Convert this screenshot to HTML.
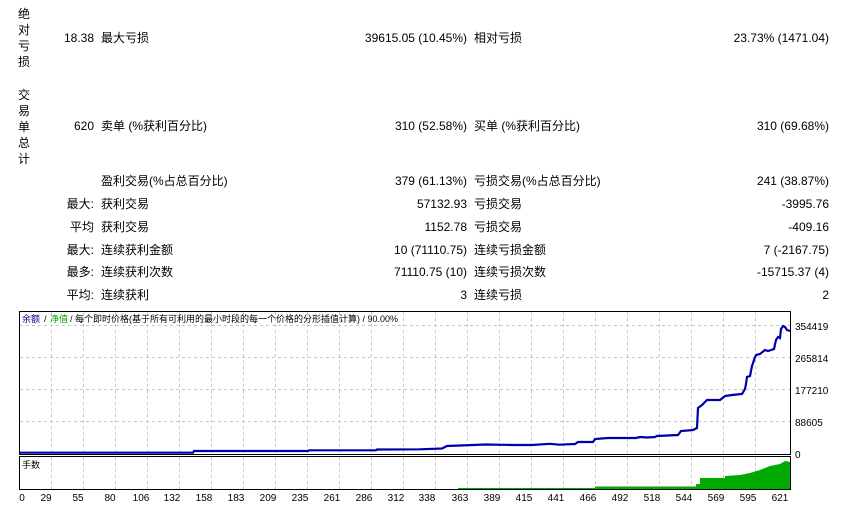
<!DOCTYPE html>
<html><head><meta charset="utf-8"><style>
body{margin:0;width:842px;height:505px;background:#fff;position:relative;overflow:hidden;font-family:"Liberation Sans","Noto Sans CJK SC",sans-serif;font-size:12px;color:#000}
.t{position:absolute;white-space:nowrap;line-height:16px}
.r{text-align:right}
</style></head><body>
<div class="t" style="left:18px;top:6px;width:14px;line-height:16px">绝<br>对<br>亏<br>损</div>
<div class="t" style="left:18px;top:87px;width:14px;line-height:16px">交<br>易<br>单<br>总<br>计</div>

<div class="t r" style="right:748px;top:30px">18.38</div>
<div class="t" style="left:101px;top:30px">最大亏损</div>
<div class="t r" style="right:375px;top:30px">39615.05 (10.45%)</div>
<div class="t" style="left:474px;top:30px">相对亏损</div>
<div class="t r" style="right:13px;top:30px">23.73% (1471.04)</div>

<div class="t r" style="right:748px;top:118px">620</div>
<div class="t" style="left:101px;top:118px">卖单 (%获利百分比)</div>
<div class="t r" style="right:375px;top:118px">310 (52.58%)</div>
<div class="t" style="left:474px;top:118px">买单 (%获利百分比)</div>
<div class="t r" style="right:13px;top:118px">310 (69.68%)</div>

<div class="t" style="left:101px;top:173px">盈利交易(%占总百分比)</div>
<div class="t r" style="right:375px;top:173px">379 (61.13%)</div>
<div class="t" style="left:474px;top:173px">亏损交易(%占总百分比)</div>
<div class="t r" style="right:13px;top:173px">241 (38.87%)</div>

<div class="t r" style="right:748px;top:196px">最大:</div>
<div class="t" style="left:101px;top:196px">获利交易</div>
<div class="t r" style="right:375px;top:196px">57132.93</div>
<div class="t" style="left:474px;top:196px">亏损交易</div>
<div class="t r" style="right:13px;top:196px">-3995.76</div>

<div class="t r" style="right:748px;top:219px">平均</div>
<div class="t" style="left:101px;top:219px">获利交易</div>
<div class="t r" style="right:375px;top:219px">1152.78</div>
<div class="t" style="left:474px;top:219px">亏损交易</div>
<div class="t r" style="right:13px;top:219px">-409.16</div>

<div class="t r" style="right:748px;top:242px">最大:</div>
<div class="t" style="left:101px;top:242px">连续获利金额</div>
<div class="t r" style="right:375px;top:242px">10 (71110.75)</div>
<div class="t" style="left:474px;top:242px">连续亏损金额</div>
<div class="t r" style="right:13px;top:242px">7 (-2167.75)</div>

<div class="t r" style="right:748px;top:264px">最多:</div>
<div class="t" style="left:101px;top:264px">连续获利次数</div>
<div class="t r" style="right:375px;top:264px">71110.75 (10)</div>
<div class="t" style="left:474px;top:264px">连续亏损次数</div>
<div class="t r" style="right:13px;top:264px">-15715.37 (4)</div>

<div class="t r" style="right:748px;top:287px">平均:</div>
<div class="t" style="left:101px;top:287px">连续获利</div>
<div class="t r" style="right:375px;top:287px">3</div>
<div class="t" style="left:474px;top:287px">连续亏损</div>
<div class="t r" style="right:13px;top:287px">2</div>

<svg style="position:absolute;left:0;top:0" width="842" height="505" font-family="Liberation Sans, Noto Sans CJK SC, sans-serif">
<g stroke="#c8c8c8" stroke-dasharray="3,3" stroke-width="1">
<line x1="20" y1="325.5" x2="790" y2="325.5"/><line x1="20" y1="357.5" x2="790" y2="357.5"/><line x1="20" y1="389.5" x2="790" y2="389.5"/><line x1="20" y1="421.5" x2="790" y2="421.5"/>
</g>
<g stroke="#c8c8c8" stroke-dasharray="3,3">
<path d="M51.5 312V454M83.5 312V454M115.5 312V454M147.5 312V454M179.5 312V454M211.5 312V454M243.5 312V454M275.5 312V454M307.5 312V454M339.5 312V454M371.5 312V454M403.5 312V454M435.5 312V454M467.5 312V454M499.5 312V454M531.5 312V454M563.5 312V454M595.5 312V454M627.5 312V454M659.5 312V454M691.5 312V454M723.5 312V454M755.5 312V454"/>
<path d="M51.5 457V489M83.5 457V489M115.5 457V489M147.5 457V489M179.5 457V489M211.5 457V489M243.5 457V489M275.5 457V489M307.5 457V489M339.5 457V489M371.5 457V489M403.5 457V489M435.5 457V489M467.5 457V489M499.5 457V489M531.5 457V489M563.5 457V489M595.5 457V489M627.5 457V489M659.5 457V489M691.5 457V489M723.5 457V489M755.5 457V489"/>
</g>
<rect x="19.5" y="311.5" width="771" height="143" fill="none" stroke="#000"/>
<rect x="19.5" y="456.5" width="771" height="33" fill="none" stroke="#000"/>
<polygon fill="#00aa00" points="458,489 458,488 595,488 595,486.5 696,486.5 696,484 700,484 700,478 725,478 725,476 740,475 750,473 760,470 770,466 780,464 785,461 790,462 790,489"/>
<polyline fill="none" stroke="#0000aa" stroke-width="2.2" points="20,452.7 193,452.7 194,451 308,451 309,450.3 376,450.3 377,449.5 420,449.3 442,448.5 447,446 486,444.5 513,445 532,445 550,443.8 559,444.7 575,444 578,442 593,442 595,439 608,438 636,438 640,437 647,437.5 655,437 657,436 678,435 681,431 693,430 697,428 698,408 702,405 705,402 707,400 720,400 725,396 732,395 742,394 745,389 746,384 747,377 750,376 752,366 754,360 756,355 760,354 765,350 768,351 774,349 776,340 778,337 780,338 781,329 783,326 785,327 787,330 790,331"/>
<g font-size="9">
<text x="22" y="322" fill="#00008b">余额</text><text x="44" y="322">/</text><text x="50" y="322" fill="#00aa00">净值</text>
<text x="70" y="322">/ 每个即时价格(基于所有可利用的最小时段的每一个价格的分形插值计算) / 90.00%</text>
<text x="22" y="468">手数</text>
</g>
<g font-size="10">
<text x="795" y="330">354419</text><text x="795" y="362">265814</text><text x="795" y="394">177210</text><text x="795" y="426">88605</text><text x="795" y="458">0</text>
</g>
<g font-size="10" text-anchor="middle">
<text x="22" y="501">0</text><text x="46" y="501">29</text><text x="78" y="501">55</text><text x="110" y="501">80</text><text x="141" y="501">106</text><text x="172" y="501">132</text><text x="204" y="501">158</text><text x="236" y="501">183</text><text x="268" y="501">209</text><text x="300" y="501">235</text><text x="332" y="501">261</text><text x="364" y="501">286</text><text x="396" y="501">312</text><text x="427" y="501">338</text><text x="460" y="501">363</text><text x="492" y="501">389</text><text x="524" y="501">415</text><text x="556" y="501">441</text><text x="588" y="501">466</text><text x="620" y="501">492</text><text x="652" y="501">518</text><text x="684" y="501">544</text><text x="716" y="501">569</text><text x="748" y="501">595</text><text x="780" y="501">621</text>
</g>
</svg>
</body></html>
